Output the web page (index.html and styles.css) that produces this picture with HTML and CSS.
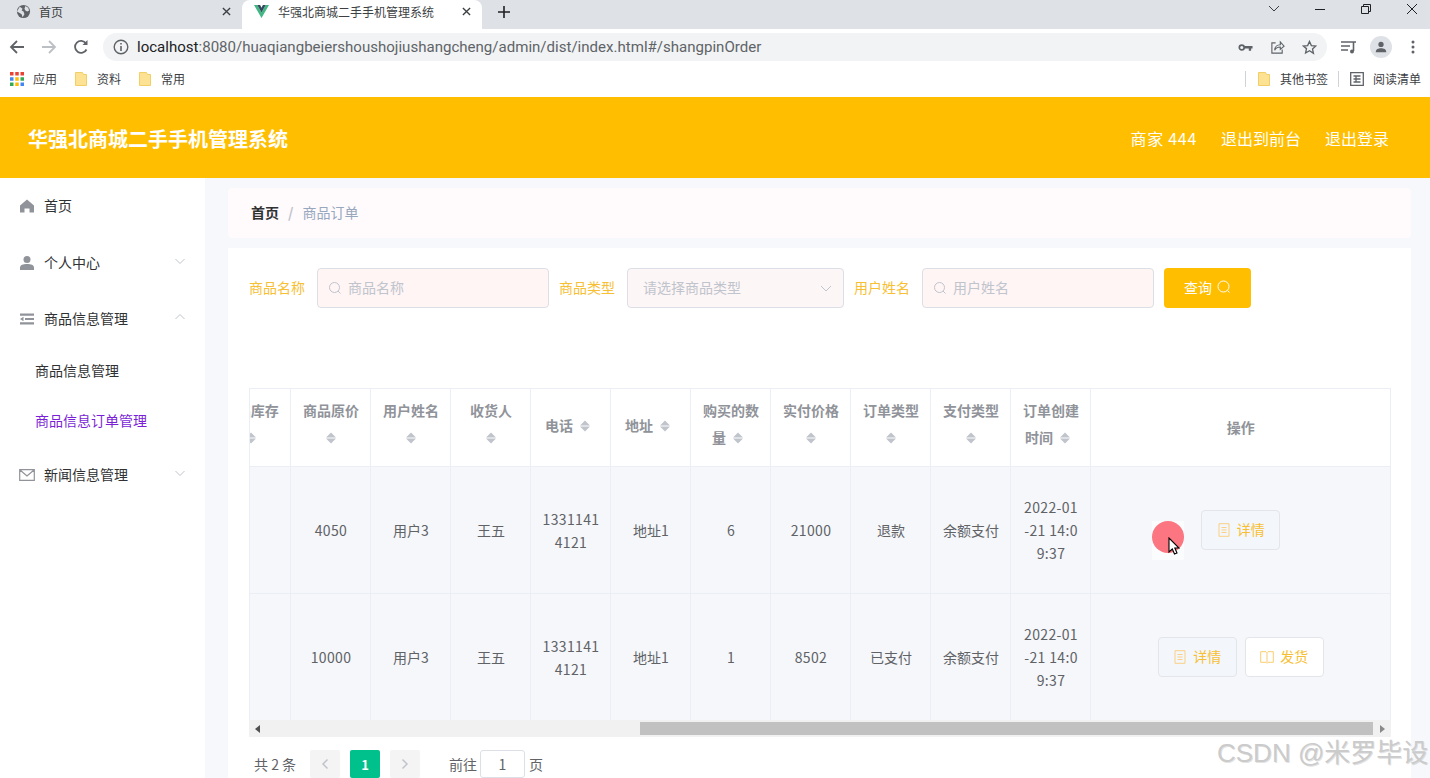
FILE: index.html
```html
<!DOCTYPE html>
<html lang="zh-CN">
<head>
<meta charset="utf-8">
<title>华强北商城二手手机管理系统</title>
<link rel="stylesheet" href="styles.css">
</head>
<body>
<div class="tabstrip">
  <div class="tab">
    <svg class="favicon" viewBox="0 0 16 16"><circle cx="8" cy="8" r="7" fill="#5f6368"/><path d="M4 3l3 2-1 2 2 1 1 3-2 3-1-3-3-2-2-1zM10 2l3 2 1 3-2 1-2-1-1-2z" fill="#dee1e6"/></svg>
    <span class="tab-title">首页</span>
    <svg class="tab-x" viewBox="0 0 10 10"><path d="M1 1l8 8M9 1l-8 8" stroke="#3c4043" stroke-width="1.5"/></svg>
  </div>
  <div class="tab tab-active">
    <svg class="favicon" viewBox="0 0 16 16"><path d="M0 1h3.500L8 9l4.500-8H16L8 15z" fill="#41b883"/><path d="M3.500 1h3L8 4l1.500-3h3L8 9z" fill="#35495e"/></svg>
    <span class="tab-title">华强北商城二手手机管理系统</span>
    <svg class="tab-x" viewBox="0 0 10 10"><path d="M1 1l8 8M9 1l-8 8" stroke="#3c4043" stroke-width="1.5"/></svg>
  </div>
  <svg class="tab-plus" viewBox="0 0 12 12"><path d="M6 0v12M0 6h12" stroke="#202124" stroke-width="1.6"/></svg>
  <div class="win-controls">
    <svg viewBox="0 0 12 12"><path d="M1 3l5 5 5-5" fill="none" stroke="#3c4043"/></svg>
    <svg viewBox="0 0 12 12"><path d="M1 6.500h10" stroke="#202124"/></svg>
    <svg viewBox="0 0 12 12"><path d="M1.500 3.500h7v7h-7zM3.500 3.500v-2h7v7h-2" fill="none" stroke="#202124"/></svg>
    <svg viewBox="0 0 12 12"><path d="M1 1l10 10M11 1L1 11" stroke="#202124"/></svg>
  </div>
</div>
<div class="toolbar">
  <svg class="nav-ico" viewBox="0 0 16 16"><path d="M15 8H2M8 2L2 8l6 6" fill="none" stroke="#5f6368" stroke-width="1.800"/></svg>
  <svg class="nav-ico" viewBox="0 0 16 16"><path d="M1 8h13M8 2l6 6-6 6" fill="none" stroke="#bcc0c4" stroke-width="1.800"/></svg>
  <svg class="nav-ico" viewBox="0 0 16 16"><path d="M13.500 10.500A6 6 0 1 1 13 4.500" fill="none" stroke="#5f6368" stroke-width="1.800"/><path d="M14.500 1v5h-5z" fill="#5f6368"/></svg>
  <div class="omnibox">
    <svg class="info-ico" viewBox="0 0 16 16"><circle cx="8" cy="8" r="6.800" fill="none" stroke="#5f6368" stroke-width="1.400"/><path d="M8 7v5M8 4v1.600" stroke="#5f6368" stroke-width="1.600"/></svg>
    <span class="url"><b>localhost</b>:8080/huaqiangbeiershoushojiushangcheng/admin/dist/index.html#/shangpinOrder</span>
    <span class="omni-icons">
      <svg viewBox="0 0 16 16"><circle cx="4" cy="8" r="2.600" fill="none" stroke="#5f6368" stroke-width="1.800"/><path d="M6.500 6.500h9v2.500h-1.500v2.500h-2.500V9h-5z" fill="#5f6368"/></svg>
      <svg viewBox="0 0 16 16"><path d="M6 3H2v11h11v-4M5 11c0-4 3-6 6-6V2l4 4.500L11 10V7.500c-3 0-5 1-6 3.500z" fill="none" stroke="#5f6368" stroke-width="1.200"/></svg>
      <svg viewBox="0 0 16 16"><path d="M8 1.500l2 4.400 4.700.5-3.500 3.200 1 4.700L8 11.500l-4.200 2.400 1-4.700L1.300 6.400 6 5.900z" fill="none" stroke="#5f6368" stroke-width="1.400"/></svg>
    </span>
  </div>
  <svg class="media-ico" viewBox="0 0 16 16"><path d="M0 3h15M0 7h9M0 11h7" stroke="#5f6368" stroke-width="1.500"/><path d="M12.500 3v9" stroke="#5f6368" stroke-width="1.600"/><circle cx="11" cy="12.500" r="2" fill="#5f6368"/></svg>
  <span class="avatar"><svg viewBox="0 0 16 16"><circle cx="8" cy="5" r="3" fill="#5f6368"/><path d="M2 14c0-3.500 3-4.500 6-4.500s6 1 6 4.500z" fill="#5f6368"/></svg></span>
  <svg class="dots" viewBox="0 0 4 16"><circle cx="2" cy="3" r="1.500" fill="#5f6368"/><circle cx="2" cy="8" r="1.500" fill="#5f6368"/><circle cx="2" cy="13" r="1.500" fill="#5f6368"/></svg>
</div>
<div class="bookmarks">
  <svg class="bm-apps" viewBox="0 0 12 12">
    <path d="M0 0h3v3H0z" fill="#ea4335"/><path d="M4.500 0h3v3h-3z" fill="#ea4335"/><path d="M9 0h3v3H9z" fill="#ea4335"/>
    <path d="M0 4.500h3v3H0z" fill="#4285f4"/><path d="M4.500 4.500h3v3h-3z" fill="#fbbc04"/><path d="M9 4.500h3v3H9z" fill="#34a853"/>
    <path d="M0 9h3v3H0z" fill="#34a853"/><path d="M4.500 9h3v3h-3z" fill="#fbbc04"/><path d="M9 9h3v3H9z" fill="#4285f4"/>
  </svg>
  <span class="bm-label bm-first">应用</span>
  <svg class="folder" viewBox="0 0 12 14"><path d="M.5.500h7l1 2h3v11H.500z" fill="#fde293" stroke="#f2cf66"/></svg>
  <span class="bm-label">资料</span>
  <svg class="folder" viewBox="0 0 12 14"><path d="M.5.500h7l1 2h3v11H.500z" fill="#fde293" stroke="#f2cf66"/></svg>
  <span class="bm-label">常用</span>
  <span class="bm-spacer"></span>
  <i class="bm-sep"></i>
  <svg class="folder" viewBox="0 0 12 14"><path d="M.5.500h7l1 2h3v11H.500z" fill="#fde293" stroke="#f2cf66"/></svg>
  <span class="bm-label">其他书签</span>
  <i class="bm-sep"></i>
  <svg class="reader" viewBox="0 0 14 14"><path d="M.7.700h12.600v12.600H.7zM3.500 4h7M3.500 7h7M3.500 10h7M6 4v6" fill="none" stroke="#5f6368" stroke-width="1.300"/></svg>
  <span class="bm-label">阅读清单</span>
</div>

<header class="app-header">
  <h1 class="app-title">华强北商城二手手机管理系统</h1>
  <nav class="app-nav">
    <span class="nav-user">商家 444</span>
    <span>退出到前台</span>
    <span>退出登录</span>
  </nav>
</header>

<div class="layout">
  <aside class="sidebar">
    <div class="menu-item">
      <svg class="menu-ico" viewBox="0 0 16 16"><path d="M8 1.500L1 7.500V14.500h4.500v-4h5v4H15V7.500z" fill="#909399"/></svg>
      <span>首页</span>
    </div>
    <div class="menu-item menu-second">
      <svg class="menu-ico" viewBox="0 0 16 16"><circle cx="8" cy="4.500" r="3.500" fill="#909399"/><path d="M1 15v-2.500C1 10 4 9 8 9s7 1 7 3.500V15z" fill="#909399"/></svg>
      <span>个人中心</span>
      <svg class="chev" viewBox="0 0 12 12"><path d="M1.500 4l4.500 4.500L10.500 4" fill="none" stroke="#c0c4cc"/></svg>
    </div>
    <div class="menu-item">
      <svg class="menu-ico" viewBox="0 0 16 16"><path d="M1 2.500h14v2.200H1zM6 6.900h9v2.200H6zM1 8l3.500-2.200v4.400zM1 11.300h14v2.200H1z" fill="#909399"/></svg>
      <span>商品信息管理</span>
      <svg class="chev" viewBox="0 0 12 12"><path d="M1.500 8L6 3.500 10.500 8" fill="none" stroke="#c0c4cc"/></svg>
    </div>
    <div class="sub-item">商品信息管理</div>
    <div class="sub-item sub-active">商品信息订单管理</div>
    <div class="menu-item">
      <svg class="menu-ico" viewBox="0 0 16 16"><path d="M.7 2.700h14.600v10.600H.7zM1 3l7 6 7-6" fill="none" stroke="#909399" stroke-width="1.200"/></svg>
      <span>新闻信息管理</span>
      <svg class="chev" viewBox="0 0 12 12"><path d="M1.500 4l4.500 4.500L10.500 4" fill="none" stroke="#c0c4cc"/></svg>
    </div>
  </aside>

  <main class="main">
    <div class="breadcrumb">
      <strong>首页</strong><span class="crumb-sep">/</span><span class="crumb-cur">商品订单</span>
    </div>
    <section class="panel">
      <form class="search">
        <label class="s-label">商品名称</label>
        <div class="s-input s-wide">
          <svg class="s-ico" viewBox="0 0 14 14"><circle cx="6.500" cy="6.500" r="5" fill="none" stroke="#c0c4cc"/><path d="M10 10l2.500 2.500" stroke="#c0c4cc"/></svg>
          <span>商品名称</span>
        </div>
        <label class="s-label">商品类型</label>
        <div class="s-input s-select">
          <span>请选择商品类型</span>
          <svg class="s-arrow" viewBox="0 0 12 12"><path d="M1 4l5 5 5-5" fill="none" stroke="#c0c4cc"/></svg>
        </div>
        <label class="s-label">用户姓名</label>
        <div class="s-input s-wide">
          <svg class="s-ico" viewBox="0 0 14 14"><circle cx="6.500" cy="6.500" r="5" fill="none" stroke="#c0c4cc"/><path d="M10 10l2.500 2.500" stroke="#c0c4cc"/></svg>
          <span>用户姓名</span>
        </div>
        <button type="button" class="s-btn">查询
          <svg viewBox="0 0 14 14"><circle cx="6.500" cy="6.500" r="5.500" fill="none" stroke="#fff"/><path d="M10.500 10.500l2 2" stroke="#fff"/></svg>
        </button>
      </form>

      <div class="table-wrap">
        <div class="table-clip">
          <table class="grid">
            <colgroup>
              <col class="c80"><col class="c80"><col class="c80"><col class="c80"><col class="c80"><col class="c80">
              <col class="c80"><col class="c80"><col class="c80"><col class="c80"><col class="c80"><col class="cop">
            </colgroup>
            <thead>
              <tr>
                <th>商品库存<svg class="sort" viewBox="0 0 24 34"><path d="M12 10.500l5 5H7zM12 21.500l-5-5h10z"/></svg></th>
                <th>商品原价<svg class="sort" viewBox="0 0 24 34"><path d="M12 10.500l5 5H7zM12 21.500l-5-5h10z"/></svg></th>
                <th>用户姓名<svg class="sort" viewBox="0 0 24 34"><path d="M12 10.500l5 5H7zM12 21.500l-5-5h10z"/></svg></th>
                <th>收货人<svg class="sort" viewBox="0 0 24 34"><path d="M12 10.500l5 5H7zM12 21.500l-5-5h10z"/></svg></th>
                <th>电话<svg class="sort" viewBox="0 0 24 34"><path d="M12 10.500l5 5H7zM12 21.500l-5-5h10z"/></svg></th>
                <th>地址<svg class="sort" viewBox="0 0 24 34"><path d="M12 10.500l5 5H7zM12 21.500l-5-5h10z"/></svg></th>
                <th>购买的数量<svg class="sort" viewBox="0 0 24 34"><path d="M12 10.500l5 5H7zM12 21.500l-5-5h10z"/></svg></th>
                <th>实付价格<svg class="sort" viewBox="0 0 24 34"><path d="M12 10.500l5 5H7zM12 21.500l-5-5h10z"/></svg></th>
                <th>订单类型<svg class="sort" viewBox="0 0 24 34"><path d="M12 10.500l5 5H7zM12 21.500l-5-5h10z"/></svg></th>
                <th>支付类型<svg class="sort" viewBox="0 0 24 34"><path d="M12 10.500l5 5H7zM12 21.500l-5-5h10z"/></svg></th>
                <th>订单创建时间<svg class="sort" viewBox="0 0 24 34"><path d="M12 10.500l5 5H7zM12 21.500l-5-5h10z"/></svg></th>
                <th>操作</th>
              </tr>
            </thead>
            <tbody>
              <tr>
                <td></td><td class="num">4050</td><td>用户3</td><td>王五</td><td class="num">13311414121</td><td>地址1</td><td class="num">6</td><td class="num">21000</td><td>退款</td><td>余额支付</td><td class="num">2022-01-21 14:09:37</td>
                <td>
                  <button type="button" class="op-btn op-plain"><svg viewBox="0 0 14 14"><path d="M2 .700h10v12.600H2zM4.500 4.500h5M4.500 7h5M4.500 9.500h5" fill="none" stroke="#fad086"/></svg>详情</button>
                </td>
              </tr>
              <tr>
                <td></td><td class="num">10000</td><td>用户3</td><td>王五</td><td class="num">13311414121</td><td>地址1</td><td class="num">1</td><td class="num">8502</td><td>已支付</td><td>余额支付</td><td class="num">2022-01-21 14:09:37</td>
                <td>
                  <button type="button" class="op-btn op-plain"><svg viewBox="0 0 14 14"><path d="M2 .700h10v12.600H2zM4.500 4.500h5M4.500 7h5M4.500 9.500h5" fill="none" stroke="#fad086"/></svg>详情</button>
                  <button type="button" class="op-btn"><svg viewBox="0 0 14 14"><path d="M.7 1.700h5.300l1 1 1-1h5.300v10.600H8l-1 1-1-1H.7zM7 2.700v9.600" fill="none" stroke="#f9cd6e"/></svg>发货</button>
                </td>
              </tr>
            </tbody>
          </table>
        </div>
        <div class="hscroll">
          <svg class="hs-arrow" viewBox="0 0 6 8"><path d="M5 0v8L0 4z" fill="#505050"/></svg>
          <span class="hs-gap"></span>
          <span class="hs-thumb"></span>
          <svg class="hs-arrow" viewBox="0 0 6 8"><path d="M1 0v8l5-4z" fill="#8a8a8a"/></svg>
        </div>
      </div>

      <div class="pager">
        <span class="pg-total">共 2 条</span>
        <span class="pg-btn"><svg viewBox="0 0 8 12"><path d="M6.500 1.500L2 6l4.500 4.500" fill="none" stroke="#c0c4cc" stroke-width="1.500"/></svg></span>
        <span class="pg-btn pg-on">1</span>
        <span class="pg-btn"><svg viewBox="0 0 8 12"><path d="M1.500 1.500L6 6l-4.500 4.500" fill="none" stroke="#c0c4cc" stroke-width="1.500"/></svg></span>
        <span class="pg-goto">前往</span>
        <span class="pg-input">1</span>
        <span class="pg-unit">页</span>
      </div>
    </section>
  </main>
</div>

<div class="click-dot"></div>
<svg class="cursor" viewBox="0 0 12 19"><path d="M1 1v14l3.300-3 2.200 5 2.500-1-2.200-5H11z" fill="#fff" stroke="#000" stroke-width="1.100"/></svg>
<div class="watermark">CSDN @米罗毕设</div>
</body>
</html>
```

FILE: styles.css
```css
* { box-sizing: border-box; }
html, body { margin: 0; height: 778px; overflow: hidden; }
body {
  width: 1430px;
  position: relative;
  font-family: "Noto Sans CJK SC", "Noto Sans", sans-serif;
  font-size: 14px;
  color: #303133;
  background: #f6f8fb;
}

/* browser chrome */
.tabstrip { height: 29px; background: #dee1e6; display: flex; align-items: center; }
.tab { width: 242px; height: 29px; display: flex; align-items: center; padding: 0 10px 6px 16px; }
.tab-active { background: #fff; border-radius: 8px 8px 0 0; width: 240px; padding-left: 12px; }
.favicon { width: 15px; height: 15px; flex: none; }
.tab-title { flex: 1; margin-left: 8px; font-size: 12px; color: #3c4043; white-space: nowrap; }
.tab-active .tab-title { margin-left: 9px; }
.tab-x { width: 9px; height: 9px; flex: none; margin-right: 1px; }
.tab-plus { width: 12px; height: 12px; margin-left: 16px; margin-bottom: 5px; }
.win-controls { margin-left: auto; display: flex; gap: 34px; padding-right: 12px; align-self: flex-start; padding-top: 3px; }
.win-controls svg { width: 12px; height: 12px; }

.toolbar { height: 35px; background: #fff; display: flex; align-items: center; padding: 1px 0 0 9px; }
.nav-ico { width: 16px; height: 16px; margin-right: 16px; flex: none; }
.omnibox {
  width: 1224px; height: 28px; margin-left: -2px; background: #f1f3f4; border-radius: 14px;
  display: flex; align-items: center; padding: 0 10px 0 10px;
}
.info-ico { width: 16px; height: 16px; flex: none; }
.url { margin-left: 8px; font-family: Roboto, sans-serif; font-size: 15.05px; color: #5f6368; white-space: nowrap; }
.url b { font-weight: 400; color: #202124; }
.omni-icons { margin-left: auto; display: flex; gap: 17px; }
.omni-icons svg { width: 15px; height: 15px; }
.media-ico { width: 16px; height: 16px; margin-left: 14px; flex: none; }
.avatar { width: 22px; height: 22px; border-radius: 50%; background: #dee1e6; margin-left: 13px; display: flex; align-items: center; justify-content: center; }
.avatar svg { width: 14px; height: 14px; }
.dots { width: 4px; height: 16px; margin-left: 19px; }

.bookmarks { height: 33px; background: #fff; display: flex; align-items: center; padding: 0 9px 3px 10px; font-size: 12px; color: #3c4043; }
.bm-apps { width: 14px; height: 14px; }
.bm-label { white-space: nowrap; margin-left: 9px; margin-bottom: 2px; }
.bm-first { margin-right: 18px; margin-left: 9px; }
.folder { width: 12px; height: 14px; flex: none; }
.folder + .bm-label { margin-right: 18px; margin-left: 10px; }
.bm-spacer { flex: 1; }
.bm-sep { width: 1px; height: 16px; background: #d0d3d7; margin-right: 6px; }
.bookmarks .bm-sep + .folder { margin-left: 6px; }
.bookmarks .bm-sep + .folder + .bm-label { margin-right: 10px; }
.reader { width: 14px; height: 14px; margin-left: 5px; flex: none; }
.reader + .bm-label { margin-left: 9px; }

/* app header */
.app-header { height: 81px; background: #ffbe00; display: flex; align-items: center; justify-content: space-between; padding: 0 41px 0 28px; color: #fff; }
.app-title { margin: 2px 0 0; font-size: 20px; font-weight: 700; }
.app-nav { display: flex; gap: 24px; font-size: 16px; }
.nav-user { letter-spacing: .7px; }

.layout { display: flex; height: 600px; }

/* sidebar */
.sidebar { width: 205px; flex: none; background: #fff; }
.menu-item { height: 56px; display: flex; align-items: center; padding: 0 20px; color: #303133; }
.menu-item span { margin-bottom: 2px; }
.menu-second { margin-top: 1px; }
.menu-ico { width: 16px; height: 16px; margin-left: -1px; margin-right: 9px; flex: none; }
.chev { width: 12px; height: 12px; margin-left: auto; margin-right: -1px; margin-top: -4px; }
.sub-item { height: 50px; display: flex; align-items: center; padding: 0 0 4px 35px; color: #303133; }
.sub-active { color: #7b1fd6; }

/* main */
.main { flex: 1; padding: 10px 19px 0 23px; display: flex; flex-direction: column; gap: 10px; }
.breadcrumb { height: 50px; flex: none; background: #fffafc; border-radius: 4px; display: flex; align-items: center; padding: 0 0 2px 23px; }
.breadcrumb strong { font-weight: 700; color: #303133; }
.crumb-sep { margin: 0 9px; color: #c0c4cc; font-weight: 700; }
.crumb-cur { color: #97a8be; }

.panel { flex: none; height: 540px; background: #fff; padding: 20px 20px 0 21px; }
.search { display: flex; align-items: center; height: 40px; }
.s-label { width: 56px; color: #f7c034; flex: none; white-space: nowrap; margin: 0 12px 3px 0; }
.s-input {
  height: 40px; background: #fff5f5; border: 1px solid #dcdfe6; border-radius: 4px;
  display: flex; align-items: center; color: #c0c4cc; margin-right: 10px;
}
.s-input span { margin-bottom: 2px; }
.s-wide { width: 232px; padding-left: 10px; }
.s-select { width: 217px; padding: 0 11px 0 15px; background: #fdf6f6; }
.s-ico { width: 14px; height: 14px; margin-right: 6px; flex: none; }
.s-arrow { width: 12px; height: 12px; margin-left: auto; }
.s-btn {
  width: 87px; height: 40px; background: #ffbe00; border: 0; border-radius: 4px; color: #fff;
  font: inherit; display: flex; align-items: center; justify-content: center; gap: 5px; padding: 0 0 2px;
}
.s-btn svg { width: 14px; height: 14px; }

.table-wrap { margin-top: 80px; width: 1142px; }
.table-clip { overflow: hidden; border: 1px solid #ebeef5; border-bottom: 0; }
.grid { border-collapse: collapse; table-layout: fixed; width: 1181px; margin-left: -40px; }
.c80 { width: 80px; }
.cop { width: 301px; }
.grid th {
  height: 77px; padding: 0 9px 0 11px; font-size: 14px; line-height: 23px; font-weight: 700; color: #909399;
  text-align: center; word-break: break-all; border-right: 1px solid #ebeef5; border-bottom: 1px solid #ebeef5; background: #fff;
}
.grid td {
  height: 127px; padding: 2px 9px 0 11px; line-height: 23px; color: #606266; text-align: center; word-break: break-all;
  background: #f5f7fb; border-right: 1px solid #ebeef5; border-bottom: 1px solid #ebeef5;
}
.grid th:last-child, .grid td:last-child { border-right: 0; padding: 0; }
.grid tr:last-child td { border-bottom: 0; }
.grid td.num { letter-spacing: .35px; }
.sort { width: 24px; height: 34px; vertical-align: middle; fill: #c0c4cc; }
.op-btn {
  width: 79px; height: 40px; background: #fff; border: 1px solid #e3e5ea; border-radius: 4px; color: #f7c034;
  font: inherit; padding: 0; display: inline-flex; align-items: center; justify-content: center; gap: 6px; vertical-align: middle;
}
.op-btn + .op-btn { margin-left: 5px; }
.op-btn svg { width: 14px; height: 14px; }
.op-plain { background: #f3f6fa; }

.hscroll { height: 17px; background: #f1f1f1; display: flex; align-items: center; }
.hs-arrow { width: 6px; height: 8px; margin: 0 6px; flex: none; }
.hs-gap { width: 373px; flex: none; }
.hs-thumb { flex: 1; height: 13px; background: #c1c1c1; }

.pager { display: flex; align-items: flex-start; margin-top: 13px; padding-left: 5px; height: 28px; font-size: 14px; color: #606266; }
.pg-total { width: 56px; line-height: 28px; white-space: nowrap; }
.pg-btn { width: 30px; height: 28px; background: #f4f4f5; border-radius: 2px; margin-right: 10px; display: flex; align-items: center; justify-content: center; font-weight: 700; font-size: 13px; }
.pg-btn svg { width: 8px; height: 12px; }
.pg-on { background: #00c08b; color: #fff; }
.pg-goto { margin-left: 19px; line-height: 28px; width: 31px; white-space: nowrap; }
.pg-input { width: 45px; height: 28px; border: 1px solid #dcdfe6; border-radius: 3px; background: #fff; text-align: center; line-height: 26px; }
.pg-unit { margin-left: 4px; line-height: 28px; }

/* overlays */
.click-dot { position: absolute; left: 1152px; top: 521px; width: 32px; height: 39px; background: #fbfcfd; }
.click-dot::before { content: ""; display: block; width: 32px; height: 32px; border-radius: 50%; background: #fb7681; }
.cursor { position: absolute; left: 1168px; top: 537px; width: 12px; height: 19px; }
.watermark { position: absolute; left: 1217px; top: 732px; font-family: "Liberation Sans", "Noto Sans CJK SC", sans-serif; font-size: 26px; color: #cbcbcb; white-space: nowrap; text-shadow: 1px 1px 0 #8f8f8f44; }
```
